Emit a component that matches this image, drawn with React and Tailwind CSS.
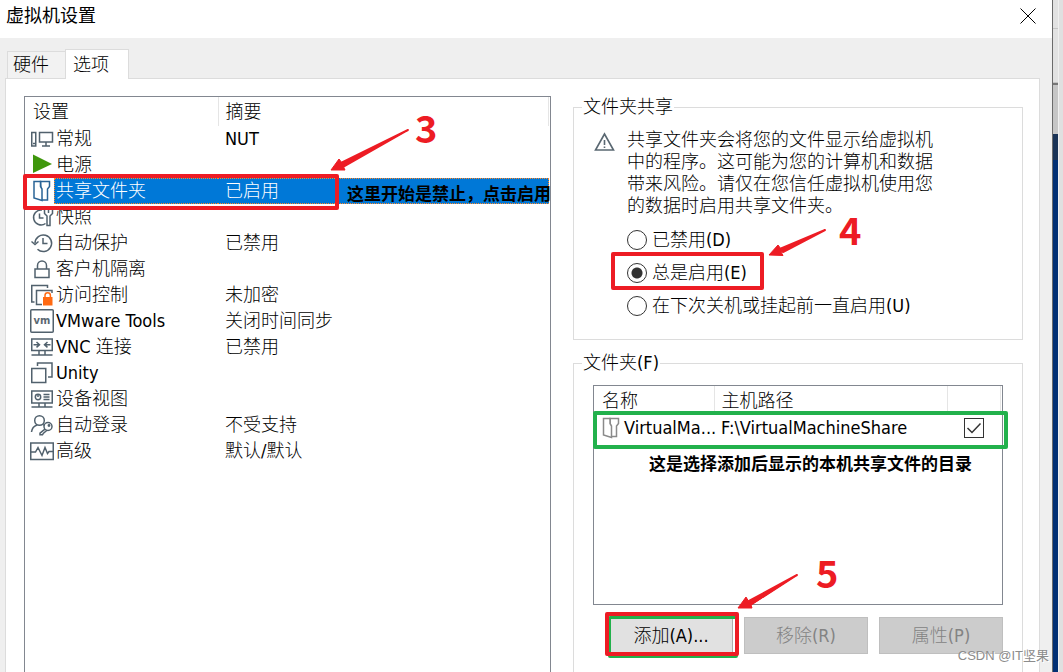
import { useState } from 'react';
import clsx from 'clsx';

const settings = [
  { id: 'general', name: '常规', summary: 'NUT' },
  { id: 'power', name: '电源', summary: '' },
  { id: 'shared', name: '共享文件夹', summary: '已启用' },
  { id: 'snapshot', name: '快照', summary: '' },
  { id: 'protect', name: '自动保护', summary: '已禁用' },
  { id: 'isolation', name: '客户机隔离', summary: '' },
  { id: 'access', name: '访问控制', summary: '未加密' },
  { id: 'tools', name: 'VMware Tools', summary: '关闭时间同步' },
  { id: 'vnc', name: 'VNC 连接', summary: '已禁用' },
  { id: 'unity', name: 'Unity', summary: '' },
  { id: 'device', name: '设备视图', summary: '' },
  { id: 'login', name: '自动登录', summary: '不受支持' },
  { id: 'advanced', name: '高级', summary: '默认/默认' },
];

const sharingModes = [
  { id: 'disabled', label: '已禁用(D)' },
  { id: 'always', label: '总是启用(E)' },
  { id: 'until-off', label: '在下次关机或挂起前一直启用(U)' },
];

const glyphs = {
  general: <path d="M1.750 6.500h4v13.500h-4zM3 17.500h2M9.500 6.500h13v9.500h-13zM16 16v4M12 20h8" />,
  power: <path d="M3 2.500v18.500l19-9z" fill="#3f970c" stroke="none" />,
  shared: (
    <g stroke="#2a6496" fill="#fff">
      <path d="M10.500 3.500h9v5l-2 2.500v11h-6z" />
      <path d="M4 3.500v16.500l8 2.500V11l-1.500-2.500V3.500z" />
    </g>
  ),
  snapshot: (
    <>
      <path d="M12 6A7.500 7.500 0 1 0 15.500 19.500M9.500 9.500v4.500h4" />
      <path d="M14.500 5v4.500l2.500 2.500v9.500h3V12l2.500-2.500V5M18.500 5v4" />
    </>
  ),
  protect: (
    <>
      <path d="M5 13a8.300 8.300 0 1 1 2.500 6.200M13 8v5.500h4.500" />
      <path d="M1.500 11.500l3.500 3 3.500-3" />
    </>
  ),
  isolation: <path d="M5 13h14v8.500H5zM7.500 13V9.500a4.500 4.500 0 0 1 9 0V13" />,
  access: (
    <>
      <path d="M4.500 20H1.750V3.500H17.500v2.500" />
      <path d="M12 22.500H6.500V8.500H22V11" />
      <path d="M13 15h9.500v8.500H13z" fill="#ff6a13" stroke="none" />
      <path d="M15 15v-1.500a2.700 2.700 0 0 1 5.400 0V15" stroke="#ff6a13" />
    </>
  ),
  tools: (
    <>
      <rect x="0.750" y="1.750" width="22.500" height="22.500" rx="1" />
      <text x="12" y="16" textAnchor="middle" fontSize="11" fontWeight="700" fill="#5a6872" stroke="none">vm</text>
    </>
  ),
  vnc: (
    <>
      <path d="M1.750 5h20.500v11.500H1.750zM1.500 21h21M9 17v4M15 17v4" />
      <path d="M3.500 10.700h6M6.500 8l3 2.700-3 2.700M20.500 10.700h-6M17.500 8l-3 2.700 3 2.700" />
    </>
  ),
  unity: (
    <>
      <path d="M1.750 8.500h14v14h-14z" />
      <path d="M7.500 6V3h14.500v14h-4" />
    </>
  ),
  device: (
    <>
      <path d="M1.750 5h20.500v12H1.750zM1.500 21h21M9 17v4M15 17v4" />
      <circle cx="8" cy="11" r="2.700" />
      <path d="M8 8v3M13.500 8.500h6M13.500 11h6M13.500 13.500h6" />
    </>
  ),
  login: (
    <>
      <circle cx="9.500" cy="8.500" r="4.800" />
      <path d="M1.500 20c.5-4 2.500-6 5.500-7M13 12.500l1.500 1" />
      <circle cx="18" cy="14.500" r="4" />
      <circle cx="19" cy="13.500" r="0.700" />
      <path d="M15 17.200l-5 4v1.500h2.500l1-1.500 3.500-3" />
    </>
  ),
  advanced: <path d="M.75 5h22.500v16.500H.75zM1 14h4.500l2.500-4.500 4 8 3-8 2.500 6 1.500-2H23" />,
};

function SettingIcon({ id }) {
  return (
    <svg className="h-[26px] w-6 shrink-0" viewBox="0 0 24 26" fill="none" stroke="#51616d" strokeWidth="1.500" aria-hidden="true">
      {glyphs[id]}
    </svg>
  );
}

function Arrow({ className, viewBox, points, shaft }) {
  return (
    <svg className={clsx('pointer-events-none absolute overflow-visible', className)} viewBox={viewBox} fill="#ed1c24" stroke="#ed1c24" strokeLinejoin="round" aria-hidden="true">
      <polygon points={points} />
      <path d={shaft} strokeWidth="2" />
    </svg>
  );
}

function Step({ className, children }) {
  return (
    <span
      className={clsx(
        "pointer-events-none absolute font-['Noto_Sans_CJK_SC',sans-serif] text-[38px] font-bold leading-none text-[#ed1c24]",
        className
      )}
    >
      {children}
    </span>
  );
}

function SettingsList({ selected, onSelect }) {
  return (
    <div className="relative border border-[#828790] bg-white pr-px">
      <table className="w-full table-fixed border-collapse text-left">
        <thead>
          <tr className="h-[29px]">
            <th className="w-[193px] border-r border-[#e5e5e5] pl-2 font-light">设置</th>
            <th className="border-r border-[#e5e5e5] pl-[7px] font-light">摘要</th>
          </tr>
        </thead>
        <tbody>
          {settings.map((item) => {
            const active = item.id === selected;
            return (
              <tr key={item.id} className="h-[26px]" onClick={() => onSelect(item.id)}>
                <td className="p-0">
                  <div className="flex pl-[5px]">
                    <SettingIcon id={item.id} />
                    <span
                      className={clsx(
                        'h-[26px] flex-1 whitespace-nowrap border border-r-0 border-dotted pl-px leading-6',
                        active ? 'border-[#ff8728] bg-[#0078d7] text-white' : 'border-transparent'
                      )}
                    >
                      {item.name}
                    </span>
                  </div>
                </td>
                <td className="p-0">
                  <div
                    className={clsx(
                      'h-[26px] border border-l-0 border-dotted pl-[7px] leading-6',
                      active ? 'border-[#ff8728] bg-[#0078d7] text-white' : 'border-transparent'
                    )}
                  >
                    {item.summary}
                  </div>
                </td>
              </tr>
            );
          })}
        </tbody>
      </table>

      {/* step 3 */}
      <div className="pointer-events-none absolute -left-[2px] top-[77px] h-9 w-[316px] rounded-xs border-4 border-[#ed1c24]" />
      <p className="absolute left-[322px] top-[85px] whitespace-nowrap text-[17px] font-bold leading-6">
        这里开始是禁止，点击启用
      </p>
      <Arrow className="left-[306px] top-[33px] h-10 w-[77px]" viewBox="0 0 77 40" points="77,0 11,33 8,29 0,40 14,40 12,36" shaft="M77 0L11 32.500l2 4z" />
      <Step className="left-[390px] top-[11px]">3</Step>
    </div>
  );
}

function SharingGroup() {
  const [mode, setMode] = useState('always');

  return (
    <fieldset className="relative min-w-0 border border-[#dcdcdc] pb-[17px] pl-5">
      <legend className="-ml-3 px-px leading-[22px]">文件夹共享</legend>
      <div className="mt-[11px] flex gap-3">
        <svg className="mt-[3px] h-5 w-[21px] shrink-0" viewBox="0 0 21 20" fill="none" stroke="#5a6872" strokeWidth="1.600" aria-hidden="true">
          <path d="M10.500 2L19.500 18H1.500zM10.500 8v5M10.500 14.500v1.500" />
        </svg>
        <p className="max-w-[310px] leading-[22px]">
          共享文件夹会将您的文件显示给虚拟机中的程序。这可能为您的计算机和数据带来风险。请仅在您信任虚拟机使用您的数据时启用共享文件夹。
        </p>
      </div>
      <div className="mt-[6px] pl-[33px]">
        {sharingModes.map((item) => (
          <label key={item.id} className="flex h-[33px] items-center gap-[5px]">
            <input
              type="radio"
              name="sharing"
              checked={mode === item.id}
              onChange={() => setMode(item.id)}
              className="size-5 appearance-none rounded-full border border-[#333] bg-white checked:bg-[radial-gradient(circle,#333_5px,#fff_6px)]"
            />
            {item.label}
          </label>
        ))}
      </div>

      {/* step 4 */}
      <div className="pointer-events-none absolute left-[37px] top-[134px] h-[38px] w-[153px] rounded-xs border-4 border-[#ed1c24]" />
      <Arrow className="left-[195px] top-[112px] h-[25px] w-14" viewBox="0 0 56 25" points="56,0 12,19 9,15 0,25 14,25.500 12,22" shaft="M56 0L12 18.500l2 3.500z" />
      <Step className="left-[265px] top-[92px]">4</Step>
    </fieldset>
  );
}

function FolderGroup() {
  const [enabled, setEnabled] = useState(true);

  return (
    <fieldset className="min-w-0 border border-[#dcdcdc] px-[19px] pb-12">
      <legend className="-ml-[11px] px-px leading-[22px]">文件夹(F)</legend>
      <div className="relative mt-[11px] h-[220px] border border-[#828790] bg-white pr-px">
        <table className="w-full table-fixed border-collapse text-left">
          <thead>
            <tr className="h-[29px]">
              <th className="w-[120px] border-r border-[#e5e5e5] pl-2 font-light">名称</th>
              <th className="border-r border-[#e5e5e5] pl-[7px] font-light">主机路径</th>
              <th className="w-[53px] border-r border-[#e5e5e5]" />
            </tr>
          </thead>
          <tbody>
            <tr className="h-[26px]">
              <td className="p-0">
                <div className="flex items-center gap-1 whitespace-nowrap pl-2">
                  <svg className="h-6 w-[18px] shrink-0" viewBox="0 0 18 24" fill="#fff" stroke="#8a8a8a" strokeWidth="1.500" aria-hidden="true">
                    <path d="M8 2.500h8.500v5l-2 2.500v10.500H9z" />
                    <path d="M1.500 2.500V19l8 2.500V10L8 7.500v-5z" />
                  </svg>
                  VirtualMa...
                </div>
              </td>
              <td className="p-0 pl-[7px]">F:\VirtualMachineShare</td>
              <td className="p-0 pl-4">
                <label className="grid size-5 place-items-center">
                  <input
                    type="checkbox"
                    aria-label="VirtualMachineShare"
                    checked={enabled}
                    onChange={(e) => setEnabled(e.target.checked)}
                    className="col-start-1 row-start-1 size-5 appearance-none border border-[#333] bg-white"
                  />
                  {enabled && (
                    <svg className="pointer-events-none col-start-1 row-start-1 size-4" viewBox="0 0 16 16" fill="none" stroke="#333" strokeWidth="1.500" aria-hidden="true">
                      <path d="M1.500 8l4.500 4.500L14.500 3.500" />
                    </svg>
                  )}
                </label>
              </td>
            </tr>
          </tbody>
        </table>
        <div className="pointer-events-none absolute -left-px -right-[6px] top-[25px] h-[38px] rounded-xs border-4 border-[#22b14c]" />
        <p className="absolute left-[55px] top-[66px] whitespace-nowrap text-[17px] font-bold leading-6">
          这是选择添加后显示的本机共享文件的目录
        </p>
      </div>
      <div className="mt-3 grid grid-cols-3 gap-[11px] pl-4">
        <div className="relative">
          <button className="h-[37px] w-full border border-[#adadad] bg-[#e1e1e1]">添加(A)...</button>
          {/* step 5 */}
          <div className="pointer-events-none absolute -bottom-1 -left-px -right-[5px] -top-px rounded-xs border-[3px] border-[#22b14c]" />
          <div className="pointer-events-none absolute -bottom-[2px] -left-1 -right-[6px] -top-[5px] rounded-xs border-4 border-[#ed1c24]" />
          <Arrow className="-right-[64px] -top-[42px] h-[33px] w-[59px]" viewBox="0 0 59 33" points="59,0 11,27 8,22 0,33 14,33 13,30" shaft="M59 0L11 26l2 3.500z" />
          <Step className="-top-[64px] left-[207px]">5</Step>
        </div>
        <button disabled className="h-[37px] border border-[#bfbfbf] bg-[#ccc] text-[#838383]">移除(R)</button>
        <button disabled className="h-[37px] border border-[#bfbfbf] bg-[#ccc] text-[#838383]">属性(P)</button>
      </div>
    </fieldset>
  );
}

// sliver of the desktop that shows past the dialog
function DesktopEdge() {
  return (
    <div className="flex w-[11px] shrink-0 border-l border-[#6b6b6b] bg-[#e0e0e0]">
      <div className="flex w-[5px] flex-col">
        <div className="h-[29px] border-b border-[#c4c4c4] bg-[#e2e2e2]" />
        <div className="h-[54px] border-b border-[#c4c4c4] bg-[#e2e2e2]" />
        <div className="h-[51px] border-t-2 border-[#777] bg-[#c6c6c6]" />
        <div className="h-[26px] bg-[#1a3356]" />
        <div className="flex-1 bg-[#022f73]" />
      </div>
      <div className="w-px bg-[#f0f0f0]" />
    </div>
  );
}

export default function App() {
  const [selected, setSelected] = useState('shared');

  return (
    <div className="flex h-screen overflow-hidden bg-white font-['DejaVu_Sans_Condensed','Noto_Sans_CJK_SC',sans-serif] text-[18px] font-light leading-6 text-black">
      <main className="flex min-w-0 flex-1 flex-col bg-[#efefef]">
        <header className="flex h-[38px] shrink-0 items-center justify-between bg-white pb-[6px] pl-[6px] pr-4">
          <h1 className="font-normal">虚拟机设置</h1>
          <button aria-label="关闭">
            <svg className="size-4" viewBox="0 0 16 16" stroke="#000" aria-hidden="true">
              <path d="M.5.5l15 15M15.500.5l-15 15" />
            </svg>
          </button>
        </header>
        <nav className="flex items-end pl-[7px] pt-[11px]" role="tablist">
          <button role="tab" aria-selected="false" className="h-[27px] w-[58px] border border-b-0 border-r-0 border-[#dcdcdc] bg-[#f2f2f2] pl-[5px] text-left">
            硬件
          </button>
          <button role="tab" aria-selected="true" className="relative z-10 -mb-px h-[30px] w-16 border border-b-0 border-[#dcdcdc] bg-white pl-[7px] text-left">
            选项
          </button>
        </nav>
        <section className="ml-[5px] mr-3 grid shrink-0 grid-cols-[527fr_450fr] gap-[22px] border border-[#dcdcdc] bg-white pb-4 pl-[18px] pr-4 pt-[17px]">
          <SettingsList selected={selected} onSelect={setSelected} />
          <div className="flex flex-col gap-3">
            <SharingGroup />
            <FolderGroup />
          </div>
        </section>
      </main>
      <DesktopEdge />
      <span className="pointer-events-none absolute bottom-1 right-[14px] font-['Liberation_Sans','Noto_Sans_CJK_SC',sans-serif] text-[13px] font-normal leading-6 text-[#8c8c8c] [text-shadow:1px_1px_0_#fff]">
        CSDN @IT坚果
      </span>
    </div>
  );
}
